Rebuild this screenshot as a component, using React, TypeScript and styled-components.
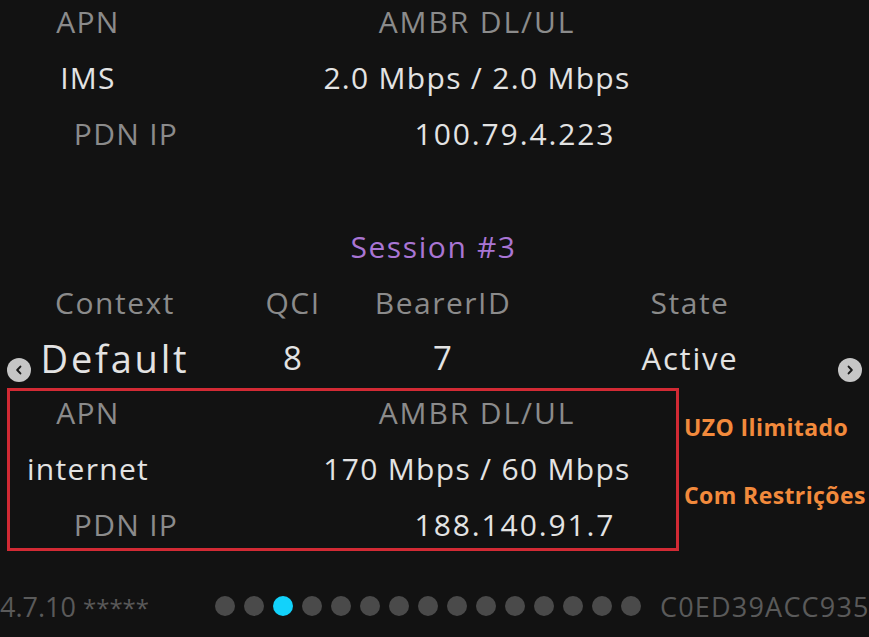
import React from "react";
import styled, { createGlobalStyle } from "styled-components";

const Global = createGlobalStyle`
  html, body { margin: 0; padding: 0; background: #121212; }
  body { font-family: "Open Sans", "Noto Sans", sans-serif; overflow: hidden; }
`;

const Page = styled.div`
  position: relative;
  width: 869px;
  height: 637px;
  background: #121212;
  overflow: hidden;
`;

const Stack = styled.div`
  display: flex;
  flex-direction: column;
  margin-top: -7px;
`;

const InfoRow = styled.div<{ $shift?: number }>`
  display: grid;
  grid-template-columns: 156px 161px 300px;
  height: 56px;
  align-items: center;
  justify-items: center;
  padding-left: ${(p) => 10 + (p.$shift ?? 0)}px;
  font-size: 30px;
  letter-spacing: 1.3px;
  white-space: nowrap;
`;

const Cell = styled.span<{ $col: number; $tone: "dim" | "bright"; $wide?: boolean }>`
  grid-column: ${(p) => p.$col};
  color: ${(p) => (p.$tone === "dim" ? "#8b8b8b" : "#e3e3e3")};
  letter-spacing: ${(p) => (p.$wide ? "1.9px" : "inherit")};
`;

const Spacer = styled.div<{ $h: number }>`
  height: ${(p) => p.$h}px;
  flex-shrink: 0;
`;

const SessionTitle = styled.div`
  height: 56px;
  display: flex;
  align-items: center;
  justify-content: center;
  color: #a975d4;
  font-size: 30px;
  letter-spacing: 1.6px;
  width: 869px;
  margin-left: -1px;
`;

const BearerGrid = styled.div<{ $h: number; $tone: "dim" | "bright" }>`
  display: grid;
  grid-template-columns: 230px 126px 174px 320px;
  height: ${(p) => p.$h}px;
  align-items: center;
  justify-items: center;
  font-size: 30px;
  letter-spacing: 1.5px;
  color: ${(p) => (p.$tone === "dim" ? "#8b8b8b" : "#e3e3e3")};
  white-space: nowrap;
`;

const BigValue = styled.span<{ $size: number; $ls: number }>`
  font-size: ${(p) => p.$size}px;
  letter-spacing: ${(p) => p.$ls}px;
`;

const BoxArea = styled.div`
  display: flex;
  align-items: flex-start;
  margin-top: 3px;
`;

const RedBox = styled.div`
  width: 666px;
  height: 157px;
  margin-left: 7px;
  border: 3px solid #d22a34;
`;

const BoxRows = styled.div`
  margin-top: -7px;
  margin-left: -10px;
  display: flex;
  flex-direction: column;
`;

const Notes = styled.div`
  display: flex;
  flex-direction: column;
  margin-left: 5px;
  padding-top: 25px;
  gap: 40px;
`;

const Note = styled.div`
  font-family: "Open Sans", "Noto Sans", sans-serif;
  font-weight: 700;
  font-size: 23px;
  color: #f28a3c;
  line-height: 28px;
  white-space: nowrap;
  letter-spacing: 0.4px;
`;

const Footer = styled.div`
  display: flex;
  align-items: center;
  height: 56px;
  margin-top: 27px;
  font-size: 27px;
  color: #5a5a5a;
  white-space: nowrap;
  letter-spacing: 1.2px;
`;

const Version = styled.span`
  width: 215px;
  flex-shrink: 0;
  letter-spacing: 0;
`;

const Stars = styled.span`
  font-size: 24px;
`;

const Dots = styled.div`
  display: flex;
  gap: 9px;
  flex-shrink: 0;
`;

const Dot = styled.span<{ $active?: boolean }>`
  width: 20px;
  height: 20px;
  border-radius: 50%;
  background: ${(p) => (p.$active ? "#12d2fb" : "#4a4a4a")};
`;

const DeviceId = styled.span`
  margin-left: 19px;
`;

const NavButton = styled.div<{ $side: "left" | "right" }>`
  position: absolute;
  top: 358px;
  left: ${(p) => (p.$side === "left" ? 7 : 838)}px;
  width: 24px;
  height: 24px;
  border-radius: 50%;
  background: #c6c6c6;
  display: flex;
  align-items: center;
  justify-content: center;
`;

const Chevron = ({ dir }: { dir: "left" | "right" }) => (
  <svg width="12" height="12" viewBox="0 0 12 12">
    <path
      d={dir === "left" ? "M7.4 2.6 L4.2 6 L7.4 9.4" : "M4.6 2.6 L7.8 6 L4.6 9.4"}
      fill="none"
      stroke="#1a1a1a"
      strokeWidth="2"
      strokeLinecap="round"
      strokeLinejoin="round"
    />
  </svg>
);

type Info = { apn: string; ambr: string; ip: string };

const InfoBlock = ({ data }: { data: Info }) => (
  <>
    <InfoRow>
      <Cell $col={1} $tone="dim">APN</Cell>
      <Cell $col={3} $tone="dim" $wide>AMBR DL/UL</Cell>
    </InfoRow>
    <InfoRow>
      <Cell $col={1} $tone="bright">{data.apn}</Cell>
      <Cell $col={3} $tone="bright">{data.ambr}</Cell>
    </InfoRow>
    <InfoRow $shift={38}>
      <Cell $col={1} $tone="dim">PDN IP</Cell>
      <Cell $col={3} $tone="bright" $wide>{data.ip}</Cell>
    </InfoRow>
  </>
);

export default function App() {
  return (
    <Page>
      <Global />
      <Stack>
        <InfoBlock data={{ apn: "IMS", ambr: "2.0 Mbps / 2.0 Mbps", ip: "100.79.4.223" }} />
        <Spacer $h={57} />
        <SessionTitle>Session #3</SessionTitle>
        <BearerGrid $h={56} $tone="dim">
          <span>Context</span>
          <span>QCI</span>
          <span>BearerID</span>
          <span>State</span>
        </BearerGrid>
        <BearerGrid $h={55} $tone="bright">
          <BigValue $size={38} $ls={2.8}>Default</BigValue>
          <BigValue $size={33} $ls={1}>8</BigValue>
          <BigValue $size={33} $ls={1}>7</BigValue>
          <BigValue $size={31} $ls={1.8}>Active</BigValue>
        </BearerGrid>
        <BoxArea>
          <RedBox>
            <BoxRows>
              <InfoBlock data={{ apn: "internet", ambr: "170 Mbps / 60 Mbps", ip: "188.140.91.7" }} />
            </BoxRows>
          </RedBox>
          <Notes>
            <Note>UZO Ilimitado</Note>
            <Note>Com Restrições</Note>
          </Notes>
        </BoxArea>
        <Footer>
          <Version>4.7.10 <Stars>*****</Stars></Version>
          <Dots>
            {Array.from({ length: 15 }, (_, i) => (
              <Dot key={i} $active={i === 2} />
            ))}
          </Dots>
          <DeviceId>C0ED39ACC935</DeviceId>
        </Footer>
      </Stack>
      <NavButton $side="left"><Chevron dir="left" /></NavButton>
      <NavButton $side="right"><Chevron dir="right" /></NavButton>
    </Page>
  );
}
